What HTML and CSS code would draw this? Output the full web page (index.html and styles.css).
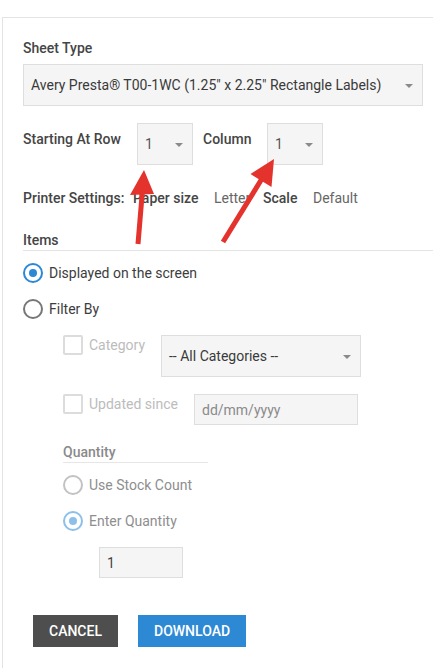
FILE: index.html
```html
<!DOCTYPE html>
<html>
<head>
<meta charset="utf-8">
<link rel="stylesheet" href="styles.css">
</head>
<body>
<div class="panel">
  <div class="label">Sheet Type</div>
  <div class="select select-wide"><span class="sel-text">Avery Presta® T00-1WC (1.25" x 2.25" Rectangle Labels)</span><span class="caret"></span></div>

  <div class="start-row">
    <div class="label label-row">Starting At Row</div>
    <div class="select select-small"><span class="sel-text">1</span><span class="caret"></span></div>
    <div class="label label-col">Column</div>
    <div class="select select-small"><span class="sel-text">1</span><span class="caret"></span></div>
  </div>

  <div class="printer">
    <span class="label ps-title">Printer Settings:</span><span class="label ps-paper">Paper size</span><span class="ps-val ps-letter">Letter</span><span class="label ps-scale">Scale</span><span class="ps-val">Default</span>
  </div>

  <div class="label section-head">Items</div>
  <div class="radio-row"><span class="radio radio-on"></span><span class="radio-label">Displayed on the screen</span></div>
  <div class="radio-row"><span class="radio radio-off"></span><span class="radio-label">Filter By</span></div>

  <div class="filter">
    <div class="check-row check-row-first">
      <span class="checkbox"></span><span class="check-label cl-cat">Category</span>
      <div class="select select-cat"><span class="sel-text">-- All Categories --</span><span class="caret"></span></div>
    </div>
    <div class="check-row">
      <span class="checkbox"></span><span class="check-label cl-upd">Updated since</span>
      <div class="input input-date">dd/mm/yyyy</div>
    </div>

    <div class="qty-head">Quantity</div>
    <div class="radio-row"><span class="radio radio-dis"></span><span class="radio-label dis">Use Stock Count</span></div>
    <div class="radio-row"><span class="radio radio-dis-on"></span><span class="radio-label dis">Enter Quantity</span></div>
    <div class="input input-qty">1</div>
  </div>

  <div class="buttons">
    <div class="btn btn-cancel">CANCEL</div>
    <div class="btn btn-download">DOWNLOAD</div>
  </div>
</div>

<svg class="arrows" width="433" height="668" viewBox="0 0 433 668">
  <line x1="138" y1="244" x2="142.5" y2="190" stroke="#e4322d" stroke-width="5"/>
  <polygon points="144,170 130,195 154,194" fill="#e4322d"/>
  <line x1="223" y1="242" x2="263" y2="177" stroke="#e4322d" stroke-width="5"/>
  <polygon points="274,159 250.5,174 271.5,187" fill="#e4322d"/>
</svg>
</body>
</html>
```

FILE: styles.css
```css
html, body {
  margin: 0;
  padding: 0;
  overflow: hidden;
  background: #fff;
}
body {
  width: 433px;
  height: 668px;
  position: relative;
  font-family: Roboto, "Liberation Sans", sans-serif;
  font-size: 14px;
  line-height: 20px;
  color: #333;
}
.panel {
  margin: 17px 0 0 2px;
  width: 431px;
  height: 651px;
  border: 1px solid #e3e3e3;
  border-right: none;
  border-bottom: none;
  padding: 20px 0 0 20px;
  box-sizing: border-box;
}
.label {
  font-weight: 500;
  color: #454545;
}
.select, .input {
  box-sizing: border-box;
  background: #f5f5f5;
  border: 1px solid #dedede;
  color: #3a3a3a;
}
.select {
  display: flex;
  align-items: center;
  justify-content: space-between;
  padding: 0 9px 0 7px;
  height: 42px;
}
.sel-text { white-space: nowrap; }
.caret {
  width: 0;
  height: 0;
  border-left: 4px solid transparent;
  border-right: 4px solid transparent;
  border-top: 4px solid #8a8a8a;
  margin-top: 1px;
}
.select-wide {
  width: 400px;
  margin-top: 6px;
}
.start-row {
  display: flex;
  align-items: flex-start;
  margin-top: 17px;
}
.label-row {
  width: 114px;
  padding-top: 6px;
}
.label-col {
  width: 64px;
  margin-left: 10px;
  padding-top: 6px;
}
.select-small {
  width: 56px;
}
.select-small .sel-text { color: #555; }
.printer {
  display: flex;
  margin-top: 23px;
  white-space: nowrap;
}
.ps-title { width: 110px; }
.ps-paper { width: 81px; }
.ps-letter { width: 49px; }
.ps-scale { width: 50px; }
.ps-val { color: #666; }
.section-head {
  margin-top: 22px;
  border-bottom: 1px solid #e3e3e3;
  margin-bottom: 4px;
}
.radio-row {
  display: flex;
  align-items: center;
  height: 36px;
}
.radio {
  width: 20px;
  height: 20px;
  box-sizing: border-box;
  border-radius: 50%;
  border: 2px solid #777;
  margin-right: 6px;
  display: flex;
  align-items: center;
  justify-content: center;
  flex: none;
}
.radio-on { border-color: #2c88d5; }
.radio-on::after, .radio-dis-on::after {
  content: "";
  width: 8px;
  height: 8px;
  border-radius: 50%;
  background: #2c88d5;
}
.radio-dis { border-color: #c2c2c2; }
.radio-dis-on { border-color: #8cc0ea; }
.radio-dis-on::after { background: #8cc0ea; }
.radio-label { color: #3d3d3d; }
.radio-label.dis { color: #8e8e8e; }
.filter {
  padding-left: 40px;
}
.check-row {
  display: flex;
  align-items: flex-start;
  margin-top: 17px;
}
.check-row-first { margin-top: 8px; }
.checkbox {
  width: 20px;
  height: 20px;
  box-sizing: border-box;
  border: 2px solid #dcdcdc;
  border-radius: 2px;
  margin-right: 6px;
  flex: none;
}
.check-label { color: #bcbcbc; white-space: nowrap; }
.cl-cat { width: 72px; }
.cl-upd { width: 105px; }
.select-cat { width: 200px; }
.input {
  height: 31px;
  padding: 0 7px;
  display: flex;
  align-items: center;
}
.input-date {
  width: 164px;
  color: #8a8a8a;
}
.qty-head {
  margin-top: 17px;
  width: 145px;
  font-weight: 500;
  color: #8a8a8a;
  border-bottom: 1px solid #e6e6e6;
  margin-bottom: 4px;
}
.input-qty {
  width: 84px;
  margin-left: 36px;
  margin-top: 8px;
  color: #444;
}
.buttons {
  display: flex;
  gap: 20px;
  margin-top: 37px;
  padding-left: 10px;
}
.btn {
  height: 32px;
  padding: 0 16px;
  display: flex;
  align-items: center;
  color: #fff;
  font-weight: 500;
  font-size: 14px;
}
.btn-cancel { background: #4e4e4e; width: 85px; box-sizing: border-box; }
.btn-download { background: #2d89d4; width: 108px; box-sizing: border-box; }
.arrows {
  position: absolute;
  left: 0;
  top: 0;
  pointer-events: none;
}
```
